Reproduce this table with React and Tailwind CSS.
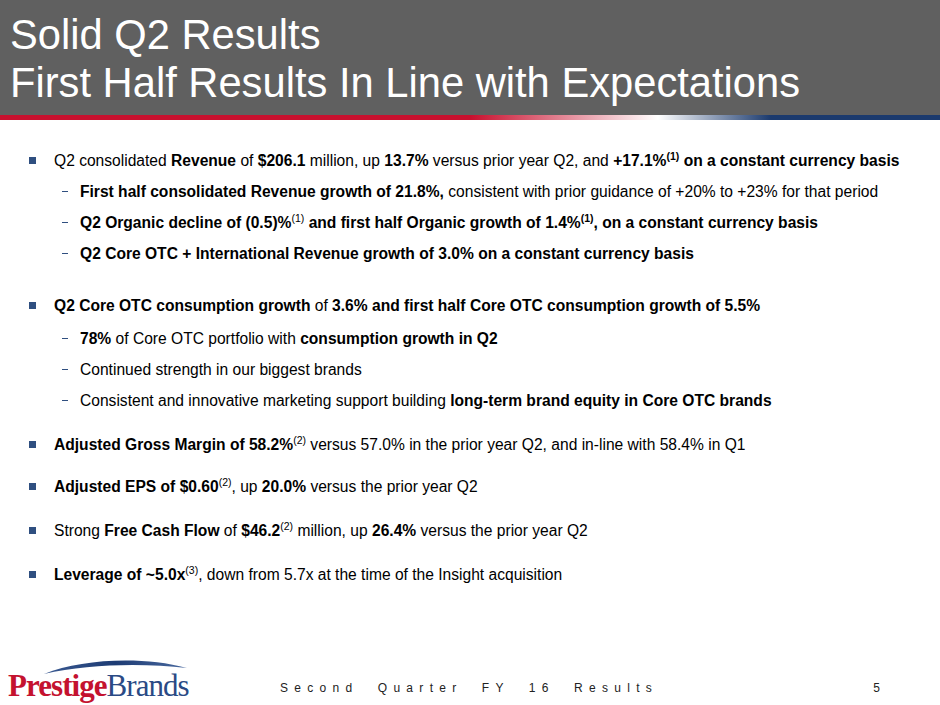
import React from "react";

const Sup = ({ children, bold }) => (
  <sup className={`text-[10.5px] relative -top-[6px] ${bold ? "font-bold" : "font-normal"}`}>{children}</sup>
);

const Main = ({ className = "", children }) => (
  <div className={`flex items-center h-[31px] ${className}`}>
    <span className="w-[7px] h-[7px] bg-[#2f4f80] ml-[29px] mr-[18px] shrink-0" />
    <span>{children}</span>
  </div>
);

const Sub = ({ className = "", children }) => (
  <div className={`flex items-center h-[31px] ${className}`}>
    <span className="w-[6px] h-[1px] bg-[#2f4f80] ml-[62px] mr-[12px] shrink-0" />
    <span>{children}</span>
  </div>
);

const Logo = () => (
  <div className="flex flex-col items-start">
    <svg width="190" height="16" viewBox="0 0 190 16" className="ml-[2px]">
      <defs>
        <linearGradient id="arcFill" x1="0" x2="1" y1="0" y2="0">
          <stop offset="0" stopColor="#3a5a92" />
          <stop offset="0.5" stopColor="#1d3b73" />
          <stop offset="1" stopColor="#4a6aa0" />
        </linearGradient>
      </defs>
      <path d="M42 15 C 80 0, 140 -3, 185 9 C 140 4, 85 5, 42 15 Z" fill="url(#arcFill)" />
    </svg>
    <div className="font-['Liberation_Serif',serif] text-[31px] leading-[30px] tracking-[-0.95px] ml-[8px] -mt-[4px]">
      <span className="text-[#c4122f] font-bold">Prestige</span>
      <span className="text-[#2a4a85]">Brands</span>
    </div>
  </div>
);

export default function App() {
  return (
    <div className="w-[940px] h-[705px] bg-white flex flex-col font-['Liberation_Sans',Arial,sans-serif] text-black overflow-hidden">
      <div className="h-[115px] bg-[#606060] text-white text-[41.7px] leading-[48px] pt-[11px] pl-[10px]">
        <div>Solid Q2 Results</div>
        <div>First Half Results In Line with Expectations</div>
      </div>
      <div className="h-[5px] bg-[linear-gradient(to_right,#c8102e_0%,#c8102e_50%,#ffffff_70%,#1b3a6e_82%,#1b3a6e_100%)]" />
      <div className="flex flex-col text-[15.6px] pt-[25px]">
        <Main>
          Q2 consolidated <b>Revenue</b> of <b>$206.1</b> million, up <b>13.7%</b> versus prior year Q2, and{" "}
          <b>+17.1%<Sup bold>(1)</Sup> on a constant currency basis</b>
        </Main>
        <Sub>
          <b>First half consolidated Revenue growth of 21.8%,</b> consistent with prior guidance of +20% to +23% for that period
        </Sub>
        <Sub>
          <b>Q2 Organic decline of (0.5)%</b><Sup>(1)</Sup> <b>and first half Organic growth of 1.4%<Sup bold>(1)</Sup>, on a constant currency basis</b>
        </Sub>
        <Sub>
          <b>Q2 Core OTC + International Revenue growth of 3.0% on a constant currency basis</b>
        </Sub>
        <Main className="mt-[21px]">
          <b>Q2 Core OTC consumption growth</b> of <b>3.6% and first half Core OTC consumption growth of 5.5%</b>
        </Main>
        <Sub className="mt-[2px]">
          <b>78%</b> of Core OTC portfolio with <b>consumption growth in Q2</b>
        </Sub>
        <Sub>Continued strength in our biggest brands</Sub>
        <Sub>
          Consistent and innovative marketing support building <b>long-term brand equity in Core OTC brands</b>
        </Sub>
        <Main className="mt-[13px]">
          <b>Adjusted Gross Margin of 58.2%</b><Sup>(2)</Sup> versus 57.0% in the prior year Q2, and in-line with 58.4% in Q1
        </Main>
        <Main className="mt-[11px]">
          <b>Adjusted EPS of $0.60</b><Sup>(2)</Sup>, up <b>20.0%</b> versus the prior year Q2
        </Main>
        <Main className="mt-[13px]">
          Strong <b>Free Cash Flow</b> of <b>$46.2</b><Sup>(2)</Sup> million, up <b>26.4%</b> versus the prior year Q2
        </Main>
        <Main className="mt-[13px]">
          <b>Leverage of ~5.0x</b><Sup>(3)</Sup>, down from 5.7x at the time of the Insight acquisition
        </Main>
      </div>
      <div className="mt-auto flex items-end pb-[4px]">
        <Logo />
        <div className="ml-[88px] mb-[4px] text-[12px] tracking-[6.3px] text-[#222] whitespace-pre">
          Second  Quarter  FY  16  Results
        </div>
        <div className="ml-auto mr-[60px] mb-[4px] text-[12px] text-[#222]">5</div>
      </div>
    </div>
  );
}
